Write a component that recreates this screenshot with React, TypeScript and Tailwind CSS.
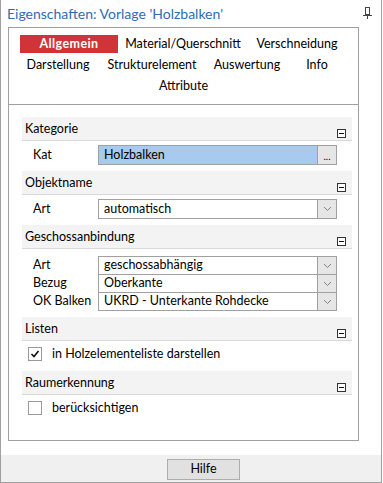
import React from 'react';

const MinusBox = () => (
  <span className="self-end mb-[2px] w-[9px] h-[9px] border border-[#333] bg-white flex items-center justify-center">
    <span className="w-[5px] h-px bg-[#111]" />
  </span>
);

const SectionHeader = ({ title }: { title: string }) => (
  <div className="h-[24px] bg-[#f3f3f3] border-b border-[#d9d9d9] flex items-center justify-between pl-[3px] pr-[6px]">
    <span className="self-center pt-[2px]">{title}</span>
    <MinusBox />
  </div>
);

const Chevron = () => (
  <svg width="9" height="6" viewBox="0 0 9 6">
    <path d="M1 1 L4.5 4.5 L8 1" fill="none" stroke="#808080" strokeWidth="1" />
  </svg>
);

const Field = ({
  value,
  button,
  highlight,
  className = '',
}: {
  value: string;
  button: 'dots' | 'chevron';
  highlight?: boolean;
  className?: string;
}) => (
  <div className={`flex w-[239px] border border-[#a0a0a0] ${className}`}>
    <div className={`flex-1 pl-[5px] flex items-center ${highlight ? 'bg-[#a8caee]' : 'bg-white'}`}>{value}</div>
    <div className="w-[19px] border-l border-[#a0a0a0] bg-[#e6e6e6] flex items-center justify-center">
      {button === 'dots' ? <span className="text-[10px] leading-none mt-[2px]">...</span> : <Chevron />}
    </div>
  </div>
);

const Row = ({ label, children }: { label: string; children: React.ReactNode }) => (
  <div className="flex items-center">
    <span className="w-[76px] pl-[11px]">{label}</span>
    {children}
  </div>
);

const Checkbox = ({ checked, label }: { checked?: boolean; label: string }) => (
  <div className="flex items-center pl-[6px] h-[14px]">
    <span className="w-[14px] h-[14px] border border-[#999] bg-white flex items-center justify-center">
      {checked && (
        <svg width="10" height="10" viewBox="0 0 10 10">
          <path d="M1.5 5 L4 7.5 L8.5 2" fill="none" stroke="#111" strokeWidth="1.6" />
        </svg>
      )}
    </span>
    <span className="ml-[10px]">{label}</span>
  </div>
);

export default function App() {
  return (
    <div className="w-[383px] h-[483px] bg-white font-['Segoe_UI','Lato',sans-serif] text-[12.5px] text-black">
      <div className="w-[382px] h-[483px] border-x border-b border-[#a0a0a0] flex flex-col">
        {/* Title */}
        <div className="h-[27px] flex items-center justify-between pl-[6px] pr-[9px]">
          <span className="text-[#2e6db4] text-[14px]">Eigenschaften: Vorlage 'Holzbalken'</span>
          <svg width="9" height="12" viewBox="0 0 9 12" className="mb-[2px]">
            <rect x="2.5" y="0.5" width="4" height="7" fill="none" stroke="#444" />
            <path d="M0 8.5 H9 M4.5 9 V12" stroke="#444" />
          </svg>
        </div>

        {/* Panel */}
        <div className="ml-[7px] w-[351px] h-[414px] border border-[#a0a0a0] flex flex-col">
          {/* Tabs */}
          <div className="h-[76px] pt-[7px] flex flex-col gap-[3px]">
            <div className="flex h-[18px] pl-[11px]">
              <div className="w-[98px] bg-[#d13438] text-white font-bold flex items-center justify-center tracking-[0.4px]">
                Allgemein
              </div>
              <div className="w-[130px] flex items-center justify-center">Material/Querschnitt</div>
              <div className="w-[98px] flex items-center justify-center">Verschneidung</div>
            </div>
            <div className="flex h-[18px] pl-[11px]">
              <div className="w-[76px] flex items-center justify-center">Darstellung</div>
              <div className="w-[112px] flex items-center justify-center">Strukturelement</div>
              <div className="w-[78px] flex items-center justify-center">Auswertung</div>
              <div className="w-[62px] flex items-center justify-center">Info</div>
            </div>
            <div className="flex h-[18px] justify-center">
              <div className="flex items-center">Attribute</div>
            </div>
          </div>
          <div className="h-px bg-[#a0a0a0]" />

          {/* Content */}
          <div className="pt-[12px] pl-[13px] pr-[6px] flex flex-col">
            <SectionHeader title="Kategorie" />
            <div className="mt-[4px] h-[20px]">
              <Row label="Kat">
                <Field value="Holzbalken" button="dots" highlight className="h-[20px]" />
              </Row>
            </div>

            <div className="mt-[6px]">
              <SectionHeader title="Objektname" />
            </div>
            <div className="mt-[4px] h-[20px]">
              <Row label="Art">
                <Field value="automatisch" button="chevron" className="h-[20px]" />
              </Row>
            </div>

            <div className="mt-[6px]">
              <SectionHeader title="Geschossanbindung" />
            </div>
            <div className="mt-[7px] flex flex-col">
              <Row label="Art">
                <Field value="geschossabhängig" button="chevron" className="h-[19px]" />
              </Row>
              <div className="-mt-px">
                <Row label="Bezug">
                  <Field value="Oberkante" button="chevron" className="h-[19px]" />
                </Row>
              </div>
              <div className="-mt-px">
                <Row label="OK Balken">
                  <Field value="UKRD - Unterkante Rohdecke" button="chevron" className="h-[19px]" />
                </Row>
              </div>
            </div>

            <div className="mt-[6px]">
              <SectionHeader title="Listen" />
            </div>
            <div className="mt-[6px]">
              <Checkbox checked label="in Holzelementeliste darstellen" />
            </div>

            <div className="mt-[10px]">
              <SectionHeader title="Raumerkennung" />
            </div>
            <div className="mt-[6px]">
              <Checkbox label="berücksichtigen" />
            </div>
          </div>
        </div>

        {/* Footer */}
        <div className="mt-[14px] flex-1 bg-[#f0f0f0] flex pl-[166px] pt-[4px]">
          <button className="w-[73px] h-[21px] border border-[#adadad] bg-[#e1e1e1] flex items-center justify-center">
            Hilfe
          </button>
        </div>
      </div>
    </div>
  );
}
